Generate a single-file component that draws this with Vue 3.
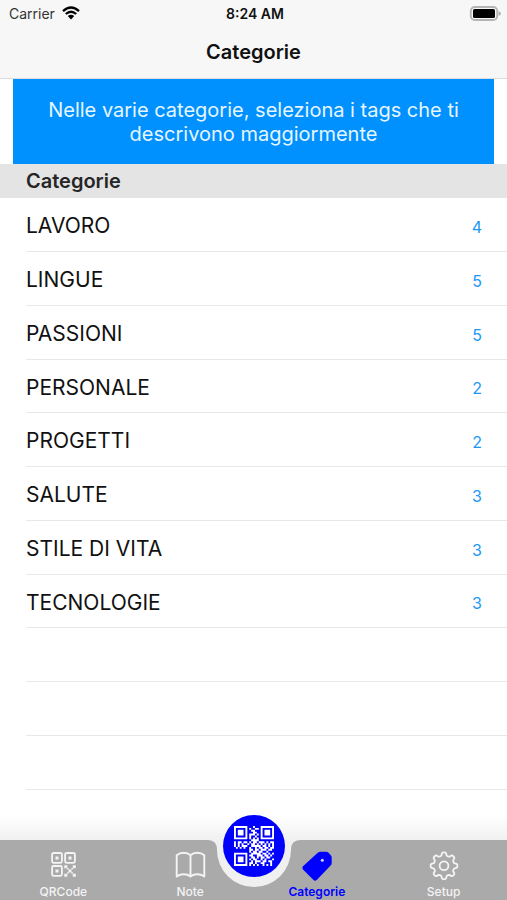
<script setup>
const categories = [
  { name: 'LAVORO', count: 4 },
  { name: 'LINGUE', count: 5 },
  { name: 'PASSIONI', count: 5 },
  { name: 'PERSONALE', count: 2 },
  { name: 'PROGETTI', count: 2 },
  { name: 'SALUTE', count: 3 },
  { name: 'STILE DI VITA', count: 3 },
  { name: 'TECNOLOGIE', count: 3 },
]
const emptyRows = 3

const tabs = [
  { id: 'qr', label: 'QRCode' },
  { id: 'note', label: 'Note' },
  { id: 'tags', label: 'Categorie', active: true },
  { id: 'setup', label: 'Setup' },
]

// Rounded eight-tooth outline: the radius eases between valley and tip.
const gearPath = (() => {
  const points = []
  for (let deg = 0; deg < 360; deg += 3) {
    const a = (deg * Math.PI) / 180
    const r = 11.8 + 1.6 * Math.tanh(2.2 * Math.cos(8 * a))
    points.push(`${(15 + r * Math.sin(a)).toFixed(2)} ${(15.8 - r * Math.cos(a)).toFixed(2)}`)
  }
  return `M${points.join('L')}Z`
})()

const qrRows = [
  '111111100010001111111',
  '100000101001101000001',
  '101110100110001011101',
  '101110100011001011101',
  '101110101110101011101',
  '100000101001001000001',
  '111111101010101111111',
  '000000000111100000000',
  '101101101011011101011',
  '101010010110101010101',
  '101011100111110110101',
  '010101001001011011011',
  '000000001101101110110',
  '000000001011011001000',
  '111111100111110110101',
  '100000101100111011010',
  '101110100110101101100',
  '101110101011001010001',
  '101110100101110110110',
  '100000101101001100010',
  '111111101010100101010',
]
const qrPath = qrRows
  .flatMap((row, y) => [...row].map((c, x) => (c === '1' ? `M${x} ${y}h1v1h-1z` : '')))
  .join('')
</script>

<template>
  <div class="screen">
    <header class="top">
      <div class="status">
        <span class="carrier">
          Carrier
          <svg class="wifi" viewBox="0 0 18 14" aria-hidden="true">
            <path d="M1 5.2Q9-2.2 17 5.2M3.8 8Q9 3.4 14.2 8" fill="none" stroke="#000" stroke-width="2.3" />
            <path d="M5.8 10.1Q9 7.4 12.2 10.1L9 13.5z" />
          </svg>
        </span>
        <span class="time">8:24 AM</span>
        <svg class="battery" viewBox="0 0 32 15" aria-hidden="true">
          <rect x="1.8" y="1" width="26.400" height="13" rx="4" fill="#f7f7f7" stroke="#b4b4b4" stroke-width="1.8" />
          <rect x="4" y="3" width="22" height="9" rx="1.500" />
          <path d="M29.500 5v5q2.500-1 2.500-2.500t-2.500-2.500z" fill="#b0b0b0" />
        </svg>
      </div>
      <h1>Categorie</h1>
    </header>

    <main>
      <p class="banner">Nelle varie categorie, seleziona i tags che ti descrivono maggiormente</p>
      <h2>Categorie</h2>
      <ul class="list">
        <li v-for="c in categories" :key="c.name">
          <button type="button" class="row">
            <span>{{ c.name }}</span>
            <span class="count">{{ c.count }}</span>
          </button>
        </li>
        <li v-for="n in emptyRows" :key="n"></li>
      </ul>
    </main>

    <footer class="bar">
      <div class="shape" aria-hidden="true">
        <i></i>
        <svg viewBox="0 0 100 60">
          <path d="M0 0H4Q13 0 13 10A37 37 0 0 0 87 10Q87 0 96 0H100V60H0Z" fill="#aaa" />
        </svg>
        <i></i>
      </div>
      <nav>
        <a v-for="t in tabs" :key="t.id" href="#" :class="{ active: t.active }">
          <svg v-if="t.id === 'qr'" viewBox="0 0 30 30" aria-hidden="true">
            <g transform="translate(.8 .2)">
              <g fill="none" stroke="currentColor" stroke-width="1.8">
                <rect x="3.300" y="2.800" width="9.800" height="9.800" rx="1.500" />
                <rect x="16.300" y="2.800" width="9.800" height="9.800" rx="1.500" />
                <rect x="3.300" y="15.800" width="9.800" height="9.800" rx="1.500" />
              </g>
              <path
                fill="currentColor"
                d="M6.700 6.200h3v3h-3zM19.700 6.200h3v3h-3zM6.700 19.200h3v3h-3zM15.500 15h3v3h-3zM24 15h3v3h-3zM19.700 19.200h3v3h-3zM15.500 23.500h3v3h-3zM24 23.500h3v3h-3zM18.300 17.800h1.500v1.500h-1.500zM22.600 17.800h1.500v1.500h-1.500zM18.300 22.100h1.500v1.500h-1.500zM22.600 22.100h1.500v1.500h-1.500z"
              />
            </g>
          </svg>
          <svg v-else-if="t.id === 'note'" viewBox="0 0 30 30" aria-hidden="true">
            <path
              d="M15.500 5.200C12 2 5.500 2 1.700 5.200V26.500C5.500 23.500 12 23.500 15.500 26.500C19 23.500 25.500 23.500 29.300 26.500V5.200C25.500 2 19 2 15.500 5.200V26.500"
              fill="none"
              stroke="currentColor"
              stroke-width="1.900"
              stroke-linejoin="round"
            />
          </svg>
          <svg v-else-if="t.id === 'tags'" viewBox="0 0 30 30" aria-hidden="true">
            <path
              fill="currentColor"
              d="M16 2.500Q17 1.700 18.500 1.700H24Q25.500 1.700 26.300 2.600L28.600 5Q29.700 6 29.700 7.500V13Q29.700 14.500 28.600 15.600L15 29.800Q13 31.500 11.300 29.800L1 19.400Q-.5 17.800 1 16.200Z"
            />
            <circle cx="20.300" cy="10.300" r="1.500" fill="#d8d8ff" />
          </svg>
          <svg v-else viewBox="0 0 30 30" aria-hidden="true">
            <g fill="none" stroke="currentColor" stroke-width="1.800" stroke-linejoin="round">
              <path :d="gearPath" />
              <circle cx="15" cy="15.800" r="4.400" />
            </g>
          </svg>
          <span>{{ t.label }}</span>
        </a>
      </nav>
      <button type="button" class="scan" aria-label="QR">
        <svg viewBox="0 0 21 21" aria-hidden="true">
          <path :d="qrPath" fill="#fff" />
        </svg>
      </button>
    </footer>
  </div>
</template>

<style>
body {
  margin: 0;
  background: #fff;
}
</style>

<style scoped>
.screen {
  min-height: 100vh;
  display: flex;
  flex-direction: column;
  font-family: Inter, "Liberation Sans", sans-serif;
  color: #111;
}
.top {
  background: #f7f7f7;
  border-bottom: 1px solid #dcdcdc;
}
.status {
  display: grid;
  grid-template-columns: 1fr auto 1fr;
  align-items: center;
  height: 26px;
  padding: 0 6px 0 9px;
  font-size: 14px;
}
.carrier {
  display: flex;
  align-items: center;
  gap: 7px;
  color: #333;
}
.wifi {
  width: 18px;
  height: 14px;
}
.time {
  font-weight: 600;
}
.battery {
  justify-self: end;
  width: 32px;
  height: 15px;
}
h1 {
  margin: 0;
  height: 52px;
  line-height: 52px;
  text-align: center;
  font-size: 20px;
  font-weight: 600;
}
main {
  flex: 1;
}
.banner {
  margin: 0 13px;
  padding: 19px 32px 18px;
  background: #0091ff;
  color: #e6f6ff;
  text-align: center;
  font-size: 20px;
  line-height: 24px;
}
h2 {
  margin: 0;
  padding-left: 26px;
  background: #e4e4e4;
  color: #262626;
  font-size: 20px;
  font-weight: 600;
  line-height: 34px;
}
.list {
  margin: 0;
  padding: 0 0 0 26px;
  list-style: none;
}
.list li {
  box-sizing: border-box;
  height: 54px;
  border-bottom: 1px solid #e8e8e8;
}
.list li:nth-child(4n) {
  height: 53px;
}
.row {
  display: flex;
  justify-content: space-between;
  align-items: center;
  width: 100%;
  height: 100%;
  padding: 2px 25px 0 0;
  border: 0;
  background: none;
  color: #111;
  font: inherit;
  font-size: 21px;
  text-align: left;
}
.count {
  padding-top: 2px;
  color: #1c97f5;
  font-size: 16px;
}
.bar {
  position: sticky;
  bottom: 0;
  padding-top: 25px;
  background: linear-gradient(#fff, #f0f0f0 26px);
}
.shape {
  position: absolute;
  inset: 25px 0 0;
  display: flex;
}
.shape i {
  flex: 1;
  background: #aaa;
}
.shape svg {
  width: 100px;
  height: 60px;
}
nav {
  position: relative;
  display: grid;
  grid-template-columns: repeat(4, 1fr);
  height: 60px;
}
nav a {
  display: flex;
  flex-direction: column;
  align-items: center;
  gap: 4px;
  padding-top: 10px;
  color: #f4f4f4;
  font-size: 12px;
  font-weight: 500;
  line-height: 15px;
  text-decoration: none;
}
nav a svg {
  width: 30px;
  height: 30px;
  overflow: visible;
}
nav a.active {
  color: #00f;
  font-weight: 600;
}
.scan {
  position: absolute;
  top: 0;
  left: 50%;
  display: grid;
  place-items: center;
  width: 62px;
  height: 62px;
  margin-left: -31px;
  padding: 0;
  border: 0;
  border-radius: 50%;
  background: #00f;
}
.scan svg {
  width: 40px;
  height: 40px;
}
</style>
